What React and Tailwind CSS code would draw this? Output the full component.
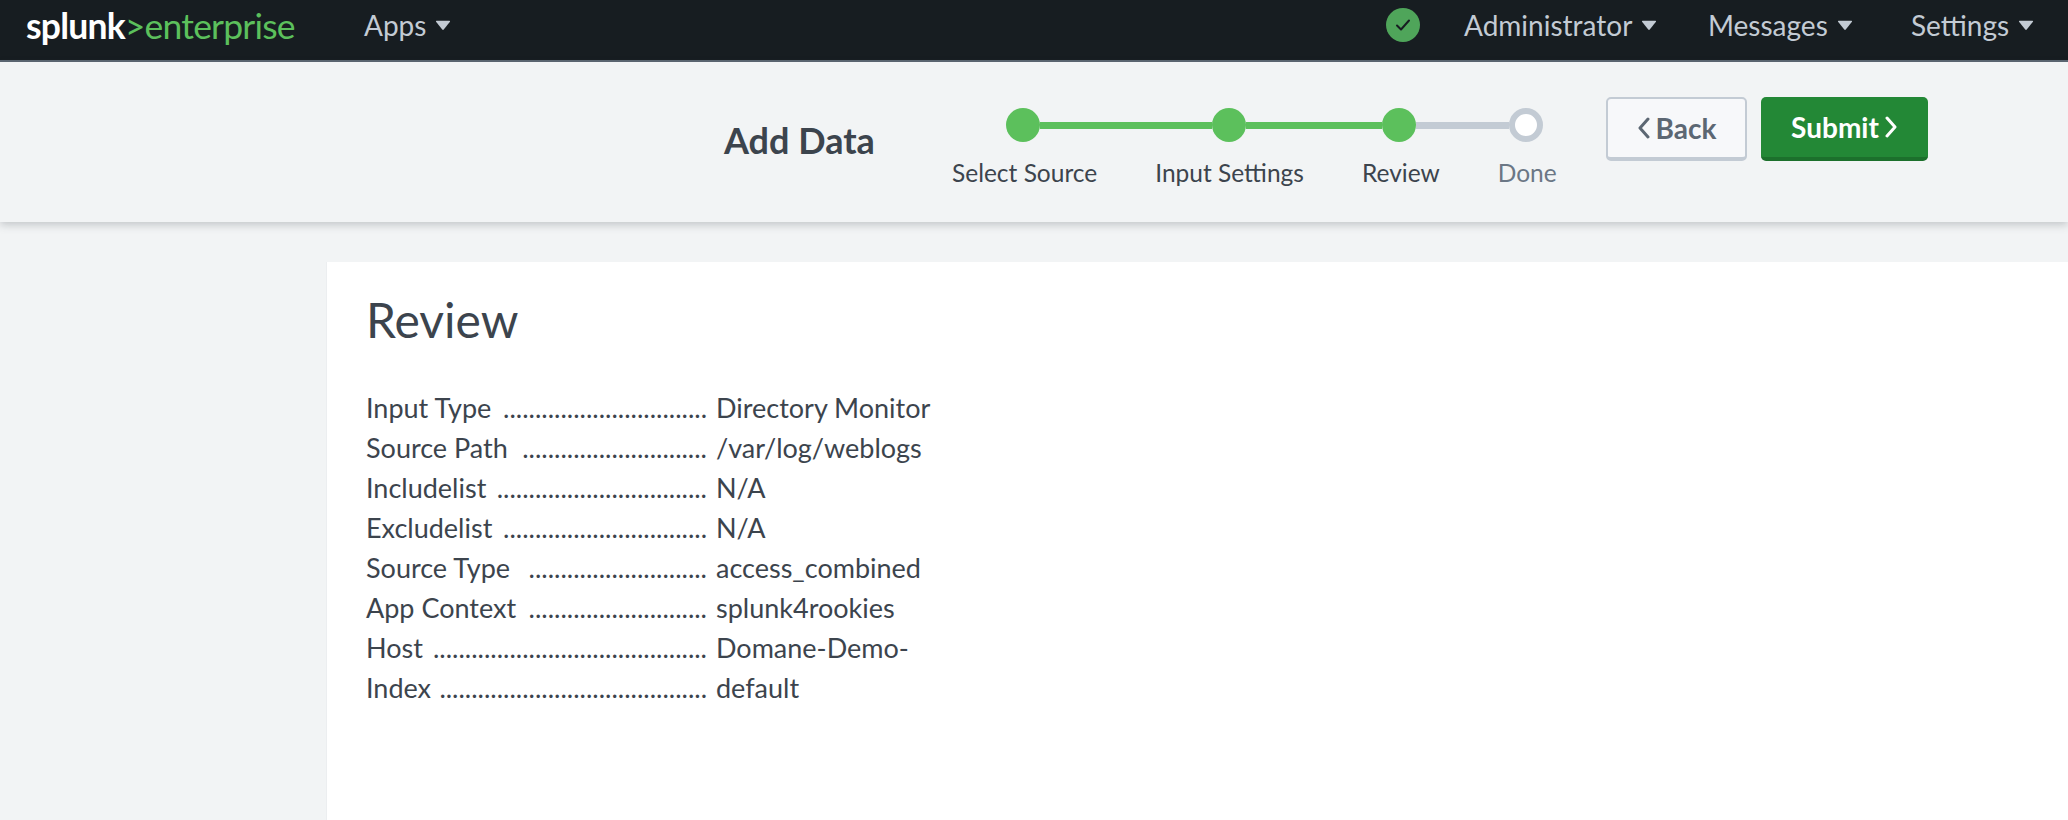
const font = { fontFamily: "Lato, 'Open Sans', sans-serif" };

function Caret() {
  return (
    <svg width="16" height="11" viewBox="0 0 15 10" className="shrink-0">
      <path d="M1 1.5 Q0.5 0.5 1.5 0.5 H13.5 Q14.5 0.5 14 1.5 L8.2 8.8 Q7.5 9.6 6.8 8.8 Z" fill="#c3cbd4" />
    </svg>
  );
}

function NavItem({ label, className }) {
  return (
    <div className={`mt-[11px] flex items-center gap-[9px] text-[28px] leading-[28px] text-[#c3cbd4] ${className}`}>
      <span>{label}</span>
      <Caret />
    </div>
  );
}

const steps = [
  { label: "Select Source", line: "w-[172px] bg-[#5cc05c]" },
  { label: "Input Settings", line: "w-[136px] bg-[#5cc05c]" },
  { label: "Review", line: "w-[93px] bg-[#c3cbd4]" },
];

const rows = [
  ["Input Type", "Directory Monitor", 32],
  ["Source Path", "/var/log/weblogs", 29],
  ["Includelist", "N/A", 33],
  ["Excludelist", "N/A", 32],
  ["Source Type", "access_combined", 28],
  ["App Context", "splunk4rookies", 28],
  ["Host", "Domane-Demo-", 43],
  ["Index", "default", 42],
];

export default function App() {
  return (
    <div className="flex h-[820px] w-[2068px] flex-col overflow-hidden bg-[#f2f4f5]" style={font}>
      <nav className="flex h-[62px] shrink-0 items-start border-b-2 border-[#5c6773] bg-[#171d21] pl-[26px]">
        <div className="mt-[1px] flex h-[50px] w-[338px] items-center text-[35.5px] leading-none tracking-[-0.8px]">
          <span className="font-bold text-white">splunk</span>
          <span className="text-[#5cc05c]">&gt;enterprise</span>
        </div>
        <NavItem label="Apps" />
        <div className="ml-auto mr-[44px] mt-[8px] flex h-[34px] w-[34px] items-center justify-center rounded-full bg-[#4fa55a]">
          <svg width="16" height="14" viewBox="0 0 16 14" fill="none">
            <path d="M2 7.5 L6 11.5 L14 2.5" stroke="#171d21" strokeWidth="2" strokeLinecap="round" strokeLinejoin="round" />
          </svg>
        </div>
        <NavItem label="Administrator" className="w-[244px] text-[27.5px]" />
        <NavItem label="Messages" className="w-[203px]" />
        <NavItem label="Settings" className="w-[157px]" />
      </nav>

      <header className="relative flex h-[160px] shrink-0 items-start bg-[#f2f4f5] pl-[724px] shadow-[0_3px_8px_rgba(60,68,77,0.25)]">
        <h1 className="mt-[58px] w-[228px] text-[36px] font-bold leading-[40px] text-[#3c444d]">Add Data</h1>
        <div className="mt-[46px] w-[654px]">
          <div className="ml-[54px] flex items-center">
            {steps.map((s) => (
              <div key={s.label} className="flex items-center">
                <span className="h-[34px] w-[34px] rounded-full bg-[#5cc05c]" />
                <span className={`h-[7px] ${s.line}`} />
              </div>
            ))}
            <span className="h-[34px] w-[34px] rounded-full border-[6px] border-[#c3cbd4] bg-white" />
          </div>
          <div className="mt-[17px] flex gap-[58px] text-[24.5px] leading-[28px] text-[#3c444d]">
            {steps.map((s) => (
              <span key={s.label}>{s.label}</span>
            ))}
            <span className="text-[#6b7785]">Done</span>
          </div>
        </div>
        <button className="mt-[35px] flex h-[64px] w-[141px] items-center justify-center gap-[6px] rounded-[5px] border-2 border-b-4 border-[#c3cbd4] bg-[#f7f8fa] text-[28px] font-bold text-[#5c6773]">
          <svg width="13" height="22" viewBox="0 0 13 22" fill="none">
            <path d="M11 2 L3 11 L11 20" stroke="#5c6773" strokeWidth="3" strokeLinecap="round" strokeLinejoin="round" />
          </svg>
          Back
        </button>
        <button className="ml-[14px] mt-[35px] flex h-[64px] w-[167px] items-center justify-center gap-[6px] rounded-[5px] border-b-4 border-[#1c702c] bg-[#238836] text-[28px] font-bold text-white">
          Submit
          <svg width="13" height="22" viewBox="0 0 13 22" fill="none">
            <path d="M2 2 L10 11 L2 20" stroke="#ffffff" strokeWidth="3" strokeLinecap="round" strokeLinejoin="round" />
          </svg>
        </button>
      </header>

      <main className="ml-[326px] mt-[40px] flex-1 border-l border-[#eceef0] bg-white pl-[39px] text-[#3c444d]">
        <h2 className="mt-[33px] text-[48px] font-normal leading-[50px]">Review</h2>
        <div className="mt-[43px] grid grid-cols-[350px_auto] justify-start text-[27px] leading-[40px]">
          {rows.map(([k, v, n]) => (
            <div key={k} className="contents">
              <div className="flex justify-between whitespace-nowrap pr-[9px]">
                <span>{k}</span>
                <span>{".".repeat(n)}</span>
              </div>
              <span>{v}</span>
            </div>
          ))}
        </div>
      </main>
    </div>
  );
}
